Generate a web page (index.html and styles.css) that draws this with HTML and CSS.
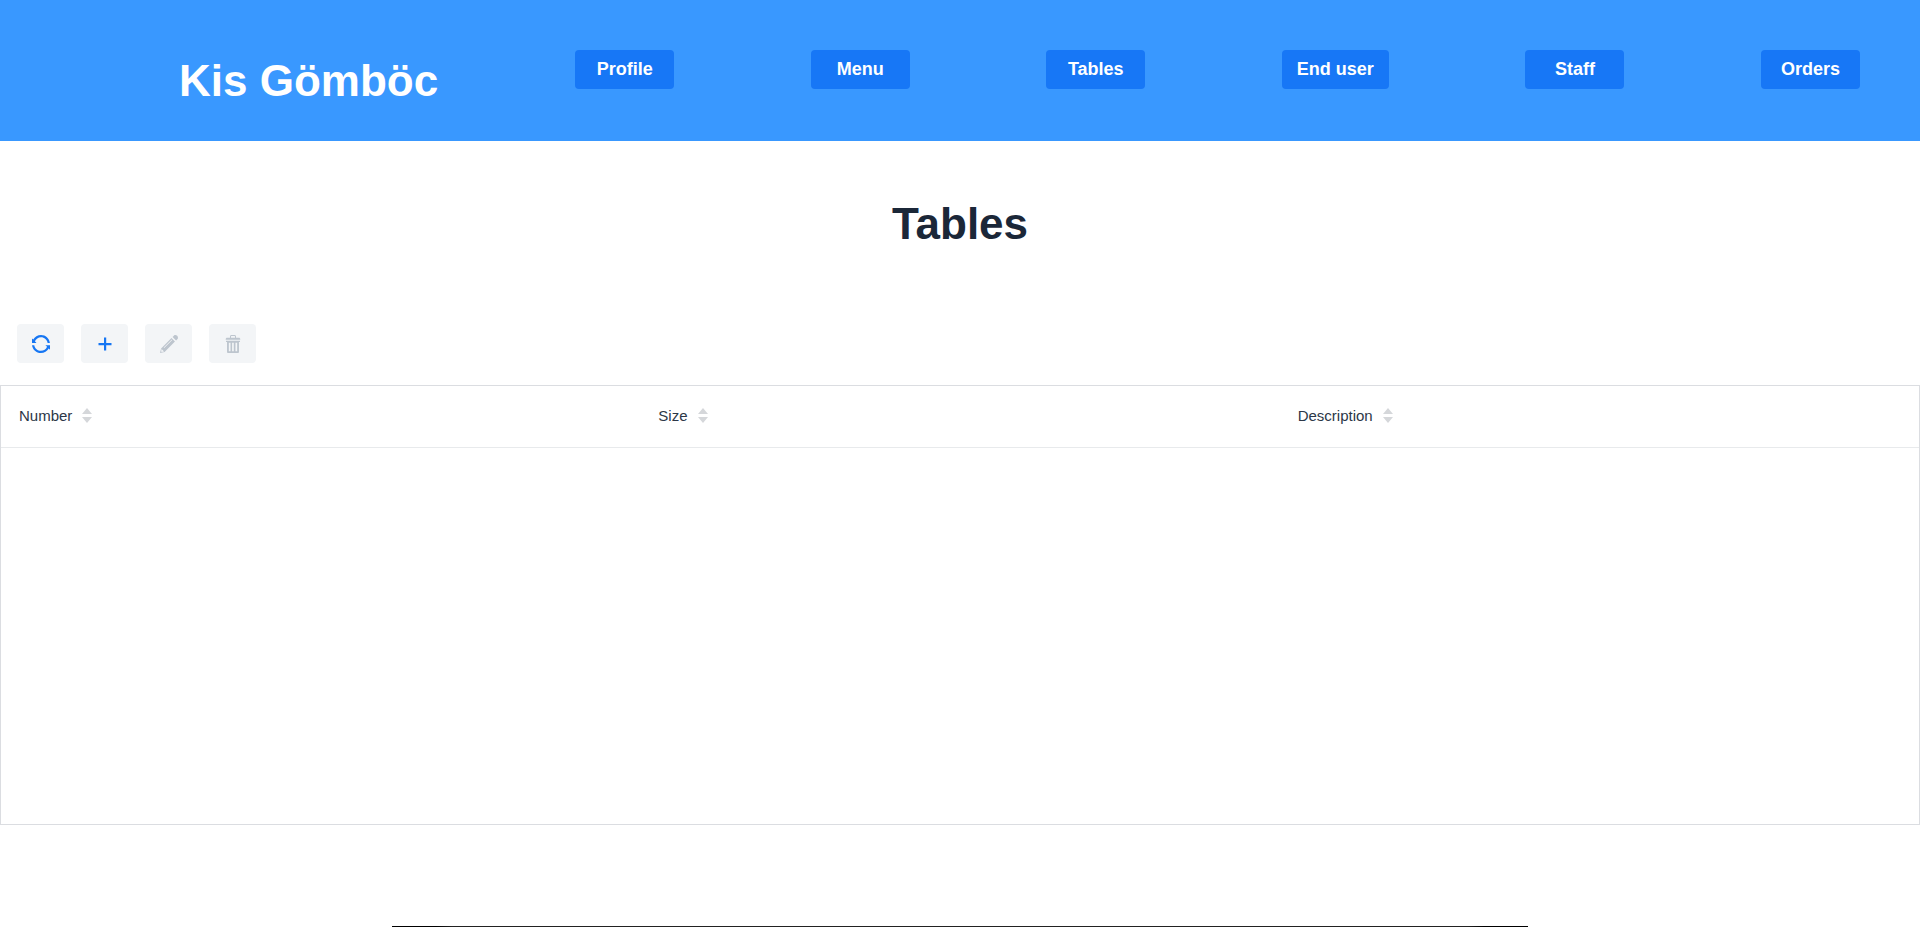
FILE: index.html
```html
<!DOCTYPE html>
<html lang="en">
<head>
<meta charset="utf-8">
<title>Tables</title>
<link rel="stylesheet" href="styles.css">
</head>
<body>
<header class="header">
  <div class="brand">Kis Gömböc</div>
  <nav class="nav">
    <button class="nav-button" type="button">Profile</button>
    <button class="nav-button" type="button">Menu</button>
    <button class="nav-button" type="button">Tables</button>
    <button class="nav-button" type="button">End user</button>
    <button class="nav-button" type="button">Staff</button>
    <button class="nav-button" type="button">Orders</button>
  </nav>
</header>
<main>
  <h1 class="title">Tables</h1>
  <div class="toolbar">
    <button class="tool" type="button" aria-label="Refresh">
      <svg class="icon" viewBox="0 0 16 16"><path d="M2.6 5.6c.9-2.1 3-3.6 5.4-3.6 3 0 5.4 2.2 5.9 5h2c-.5-3.9-3.8-7-7.9-7-3 0-5.6 1.6-6.9 4.1L0 3v4h4L2.6 5.6z"/><path d="M16 9h-4.1l1.5 1.4c-.9 2.1-3 3.6-5.5 3.6C5 14 2.5 11.8 2 9H0c.5 3.9 3.9 7 7.9 7 3 0 5.6-1.7 7-4.1l1.100 1.100V9z"/></svg>
    </button>
    <button class="tool" type="button" aria-label="Add">
      <svg class="icon" viewBox="0 0 18 18"><path d="M8 2.500h2.200V8h5.300v2.200h-5.300v5.300H8v-5.300H2.500V8H8z"/></svg>
    </button>
    <button class="tool" type="button" aria-label="Edit" disabled>
      <svg class="icon" viewBox="0 0 16 16"><path d="M1 11.900 0 16l4.100-1 9.200-9.200-3.100-3.100L1 11.900zM1.500 15 1 14.400l.4-2 2.200 2.200-2.100.4zM10.900 4.400 3.700 11.600l-.4-.4 7.200-7.200.4.400z" fill-rule="evenodd"/><path d="M15.300.700c-1.100-1.100-2.600-.5-2.600-.5l-1.500 1.500 3.100 3.100 1.500-1.500s.6-1.500-.5-2.600z"/></svg>
    </button>
    <button class="tool" type="button" aria-label="Delete" disabled>
      <svg class="icon" viewBox="0 0 16 16"><path fill-rule="evenodd" d="M13.200 2.500H10.700v-1C10.700.5 10.200 0 9.200 0H6.800C5.800 0 5.300.5 5.300 1.500v1H2.800C2 2.500 1.500 3 1.500 4.300h13c0-1.300-.5-1.800-1.300-1.800zM9.800 2.500H6.200V1.600c0-.5.100-.7.600-.7h2.400c.5 0 .6.200.6.700v.9z"/><path fill-rule="evenodd" d="M1.800 5h12.400v1.200h-.9V15c0 .5-.5 1-1 1H3.700c-.5 0-1-.5-1-1V6.200h-.9zM4.300 6.800v7.700h1.500V6.800zM7.200 6.800v7.700h1.500V6.800zM10.200 6.800v7.700h1.500V6.800z"/></svg>
    </button>
  </div>
  <div class="grid">
    <table class="grid-table">
      <thead>
        <tr>
          <th scope="col"><span class="column">Number<svg class="sorter" viewBox="0 0 10 15"><path d="M5 0l5 6H0zM0 9h10l-5 6z"/></svg></span></th>
          <th scope="col"><span class="column">Size<svg class="sorter" viewBox="0 0 10 15"><path d="M5 0l5 6H0zM0 9h10l-5 6z"/></svg></span></th>
          <th scope="col"><span class="column">Description<svg class="sorter" viewBox="0 0 10 15"><path d="M5 0l5 6H0zM0 9h10l-5 6z"/></svg></span></th>
        </tr>
      </thead>
    </table>
  </div>
</main>
<footer class="banner"></footer>
</body>
</html>
```
FILE: styles.css
```css
* {
  box-sizing: border-box;
}

html,
body {
  height: 100%;
}

body {
  display: flex;
  flex-direction: column;
  margin: 0;
  overflow: hidden;
  font-family: "Liberation Sans", Arial, sans-serif;
  color: #1b2738;
  background: #fff;
}

.header {
  display: flex;
  align-items: flex-start;
  gap: 137px;
  padding: 50px 60px 35px 179px;
  background: #3998ff;
}

.brand {
  padding-top: 6px;
  font-size: 44px;
  line-height: 50px;
  font-weight: 700;
  color: #fff;
  white-space: nowrap;
}

.nav {
  flex: 1;
  display: flex;
  justify-content: space-between;
}

.nav-button {
  min-width: 99px;
  height: 39px;
  padding: 0 15px;
  border: 0;
  border-radius: 4px;
  background: #1777f6;
  color: #fff;
  font-family: inherit;
  font-size: 18px;
  font-weight: 700;
  white-space: nowrap;
}

.title {
  margin: 54px 0 72px;
  font-size: 44px;
  line-height: 57px;
  text-align: center;
}

.toolbar {
  display: flex;
  gap: 17px;
  padding: 0 17px;
}

.tool {
  display: flex;
  align-items: center;
  justify-content: center;
  width: 47px;
  height: 39px;
  padding: 0;
  border: 0;
  border-radius: 4px;
  background: #f3f5f7;
  color: #1676f3;
}

.tool:disabled {
  color: #bdc5ce;
}

.icon {
  width: 18px;
  height: 18px;
  fill: currentColor;
}

.grid {
  height: 440px;
  margin-top: 22px;
  border: 1px solid #dbdde1;
}

.grid-table {
  width: 100%;
  table-layout: fixed;
  border-collapse: separate;
  border-spacing: 0;
}

.grid-table th {
  height: 62px;
  padding: 0 18px 3px;
  border-bottom: 1px solid #e8eaec;
  color: #2c3747;
  font-size: 15px;
  font-weight: 400;
  text-align: left;
}

.column {
  display: flex;
  align-items: center;
  gap: 10px;
}

.sorter {
  width: 10px;
  height: 15px;
  fill: #d5d7da;
}

.banner {
  flex: 1;
  align-self: center;
  width: 1136px;
  max-width: 100%;
  margin-top: 101px;
  background: linear-gradient(90deg, #000 44px, #222 60px, #222 calc(100% - 60px), #000 calc(100% - 44px));
}
```
